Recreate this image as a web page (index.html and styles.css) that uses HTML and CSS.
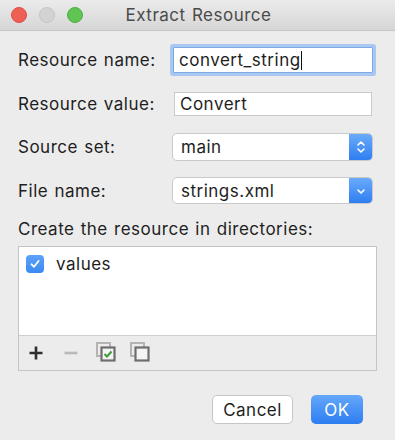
FILE: index.html
```html
<!DOCTYPE html>
<html>
<head>
<meta charset="utf-8">
<link rel="stylesheet" href="styles.css">
</head>
<body>
<div class="window">
  <div class="titlebar">
    <div class="lights">
      <span class="light red"></span>
      <span class="light grey"></span>
      <span class="light green"></span>
    </div>
    <div class="title">Extract Resource</div>
  </div>
  <div class="content">
    <div class="row r1">
      <div class="label">Resource name:</div>
      <div class="input focused"><span>convert_string</span><span class="caret"></span></div>
    </div>
    <div class="row r2">
      <div class="label">Resource value:</div>
      <div class="input plain">Convert</div>
    </div>
    <div class="row r3">
      <div class="label">Source set:</div>
      <div class="select">
        <span class="sel-text">main</span>
        <span class="sel-btn">
          <svg width="10" height="16" viewBox="0 0 10 16"><path d="M2 6 L5 3 L8 6 M2 10 L5 13 L8 10" fill="none" stroke="#fff" stroke-width="1.6" stroke-linecap="round" stroke-linejoin="round"/></svg>
        </span>
      </div>
    </div>
    <div class="row r4">
      <div class="label">File name:</div>
      <div class="select s2">
        <span class="sel-text">strings.xml</span>
        <span class="sel-btn">
          <svg width="10" height="10" viewBox="0 0 10 10"><path d="M2 4 L5 7 L8 4" fill="none" stroke="#fff" stroke-width="1.6" stroke-linecap="round" stroke-linejoin="round"/></svg>
        </span>
      </div>
    </div>
    <div class="row r5">
      <div class="label">Create the resource in directories:</div>
    </div>
    <div class="list">
      <div class="list-body">
        <div class="item">
          <span class="checkbox">
            <svg width="12" height="12" viewBox="0 0 12 12"><path d="M2.5 6.3 L5 8.8 L9.6 3" fill="none" stroke="#fff" stroke-width="1.8" stroke-linecap="round" stroke-linejoin="round"/></svg>
          </span>
          <span class="item-text">values</span>
        </div>
      </div>
      <div class="toolbar">
        <svg class="tb plus" width="16" height="16" viewBox="0 0 16 16"><path d="M8 1.5 V14.5 M1.5 8 H14.5" stroke="#2e2e2e" stroke-width="2.6"/></svg>
        <svg class="tb minus" width="16" height="16" viewBox="0 0 16 16"><path d="M1.5 8 H14.5" stroke="#b9b9b9" stroke-width="2.6"/></svg>
        <svg class="tb chk" width="20" height="20" viewBox="0 0 20 20">
          <rect x="1" y="1" width="13" height="13" fill="none" stroke="#b3b3b3" stroke-width="2"/>
          <rect x="5.5" y="5.5" width="13" height="13" fill="#f4f4f4" stroke="#6e6e6e" stroke-width="2.2"/>
          <path d="M8.5 12 L11 14.5 L15.5 9.5" fill="none" stroke="#3f9a3a" stroke-width="2"/>
        </svg>
        <svg class="tb unchk" width="20" height="20" viewBox="0 0 20 20">
          <rect x="1" y="1" width="13" height="13" fill="none" stroke="#b3b3b3" stroke-width="2"/>
          <rect x="5.5" y="5.5" width="13" height="13" fill="#f4f4f4" stroke="#6e6e6e" stroke-width="2.2"/>
        </svg>
      </div>
    </div>
    <div class="buttons">
      <div class="btn cancel">Cancel</div>
      <div class="btn ok">OK</div>
    </div>
  </div>
</div>
</body>
</html>
```
FILE: styles.css
```css
html, body {
  margin: 0;
  padding: 0;
  background: #ececec;
}
body {
  font-family: Inter, "Liberation Sans", Arial, sans-serif;
  color: #1e1e1e;
  letter-spacing: 0.5px;
  word-spacing: 1px;
}
.window {
  width: 395px;
  height: 440px;
  background: #ececec;
  overflow: hidden;
}
.titlebar {
  height: 31px;
  box-sizing: border-box;
  border-bottom: 1px solid #c6c6c6;
  background: linear-gradient(#ebebeb, #d6d6d6);
  display: flex;
  align-items: center;
  position: relative;
}
.lights {
  display: flex;
  gap: 12px;
  padding-left: 11px;
}
.light {
  width: 16px;
  height: 16px;
  border-radius: 50%;
  box-sizing: border-box;
}
.red { background: #ee5f56; border: 1px solid #df4c44; }
.grey { background: #d3d3d3; border: 1px solid #c5c5c5; }
.green { background: #5fc451; border: 1px solid #4eb043; }
.title {
  position: absolute;
  left: 0;
  right: 0;
  text-align: center;
  font-size: 17px;
  color: #4b4b4b;
  padding-left: 2px;
}
.content {
  padding: 13px 18px 0 18px;
}
.row {
  display: flex;
  align-items: center;
}
.label {
  width: 152px;
  flex: none;
  font-size: 17px;
  color: #1e1e1e;
  white-space: nowrap;
}
.r1 { height: 32px; }
.r2 { height: 24px; margin-top: 16px; }
.r3 { height: 28px; margin-top: 17px; }
.r4 { height: 27px; margin-top: 16px; }
.r5 { height: 22px; margin-top: 14px; }
.r5 .label { width: auto; }
.input {
  background: #fff;
  box-sizing: border-box;
  display: flex;
  align-items: center;
  font-size: 17px;
  color: #1e1e1e;
}
.focused {
  margin-left: 3px;
  width: 200px;
  height: 26px;
  border: 1px solid #7ea9e8;
  box-shadow: 0 0 0 3px #a9c7f1;
  border-radius: 1px;
  padding-left: 5px;
}
.caret {
  width: 1px;
  height: 19px;
  background: #111;
  margin-left: 0;
}
.plain {
  margin-left: 4px;
  width: 198px;
  height: 24px;
  border: 1px solid #cacaca;
  padding-left: 5px;
}
.select {
  margin-left: 2px;
  width: 201px;
  height: 28px;
  box-sizing: border-box;
  border: 1px solid #c9c9c9;
  border-radius: 5px;
  background: #fff;
  display: flex;
  align-items: stretch;
  overflow: hidden;
}
.s2 { height: 27px; }
.sel-text {
  flex: 1;
  display: flex;
  align-items: center;
  padding-left: 8px;
  font-size: 17px;
}
.sel-btn {
  width: 23px;
  background: linear-gradient(#6aaaf9, #2f7ef2);
  display: flex;
  align-items: center;
  justify-content: center;
}
.list {
  margin-top: 6px;
  width: 359px;
  height: 125px;
  box-sizing: border-box;
  border: 1px solid #c4c4c4;
  display: flex;
  flex-direction: column;
}
.list-body {
  height: 88px;
  background: #fff;
  border-bottom: 1px solid #cfcfcf;
}
.item {
  display: flex;
  align-items: center;
  padding: 7px 0 0 7px;
}
.checkbox {
  width: 18px;
  height: 18px;
  border-radius: 4px;
  background: linear-gradient(#5ea2f8, #3a8af3);
  display: flex;
  align-items: center;
  justify-content: center;
}
.item-text {
  margin-left: 12px;
  font-size: 17px;
}
.toolbar {
  flex: 1;
  background: #ececec;
  display: flex;
  align-items: center;
  padding-left: 9px;
}
.tb { display: block; }
.minus { margin-left: 19px; }
.chk { margin-left: 17px; margin-top: -2px; }
.unchk { margin-left: 14px; margin-top: -2px; }
.buttons {
  margin-top: 24px;
  display: flex;
  justify-content: flex-end;
  gap: 18px;
  padding-right: 14px;
}
.btn {
  height: 29px;
  box-sizing: border-box;
  border-radius: 5px;
  font-size: 17px;
  display: flex;
  align-items: center;
  justify-content: center;
}
.cancel {
  width: 81px;
  background: #fff;
  border: 1px solid #c6c6c6;
  color: #1e1e1e;
}
.ok {
  width: 52px;
  background: linear-gradient(#65a8fa, #2d7df2);
  color: #fff;
}
```
